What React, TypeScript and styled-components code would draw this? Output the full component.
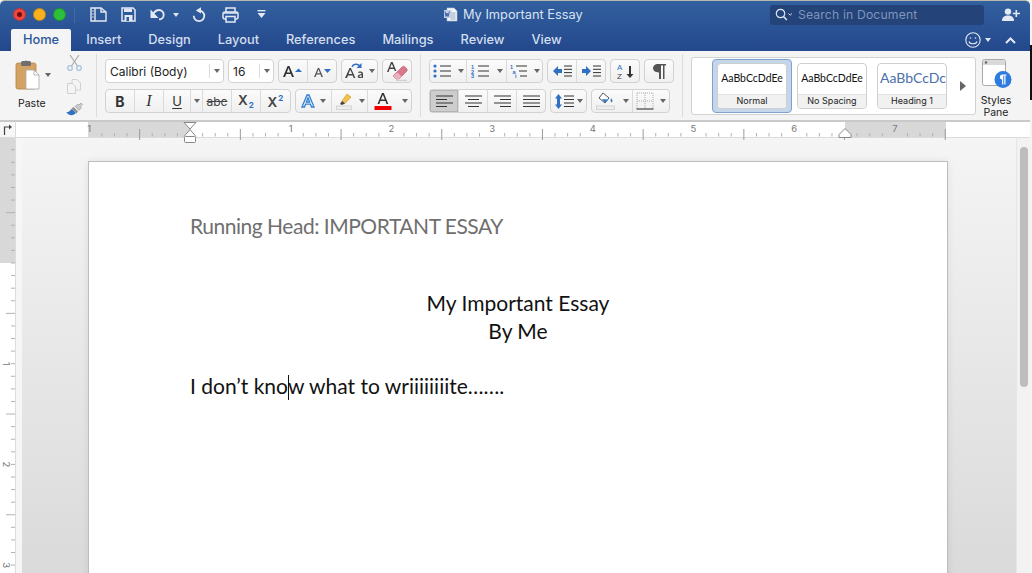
import styled, { createGlobalStyle } from "styled-components";

// #2f5a9e -> #24488c (title bar)
// #f3f3f3 (ribbon)
// #2b579a (active tab text)
const UI = `"Inter", "Liberation Sans", sans-serif`;
const DOC = `"Lato", "Open Sans", sans-serif`;

const Global = createGlobalStyle`
  html, body { margin: 0; padding: 0; background: #fff; overflow: hidden; }
  * { box-sizing: border-box; }
`;

const Screen = styled.div`
  width: 1032px;
  height: 573px;
  overflow: hidden;
  display: flex;
  flex-direction: column;
  font-family: ${UI};
  background: linear-gradient(#f6f4f0 45px, #111 45px, #111 100px, #f4f4f4 100px);
`;

const Blue = styled.div`
  height: 51px;
  flex: none;
  background: linear-gradient(#33609f, #23488c);
  border-top: 1px solid #b9b6ae;
  margin-right: 2px;
  border-radius: 5px 5px 0 0;
`;

const TitleBar = styled.div`
  height: 27px;
  display: grid;
  grid-template-columns: 444px 326px 214px 1fr;
  align-items: center;
`;

const TitleLeft = styled.div`
  display: flex;
  align-items: center;
  padding-left: 13px;
`;

const Light = styled.span<{ $c: string }>`
  width: 13px;
  height: 13px;
  border-radius: 50%;
  background: ${(p) => p.$c};
  border: 1px solid rgba(0, 0, 0, 0.22);
  margin-right: 7px;
  display: flex;
  align-items: center;
  justify-content: center;
`;

const RedDot = styled.span`
  width: 5px;
  height: 5px;
  border-radius: 50%;
  background: #6d0b0b;
`;

const TitleDivider = styled.span`
  width: 1px;
  height: 16px;
  background: #3f6aa8;
  margin: 0 15px 0 1px;
`;

const QuickIcon = styled.span<{ $w: number; $gap?: number }>`
  width: ${(p) => p.$w}px;
  height: 18px;
  margin-right: ${(p) => p.$gap ?? 0}px;
  display: flex;
  align-items: center;
  justify-content: center;
`;

const DocTitle = styled.div`
  display: flex;
  align-items: center;
  gap: 5px;
  color: #d9e3f1;
  font-size: 12.8px;
`;

const SearchBox = styled.div`
  height: 20px;
  background: #234379;
  border-radius: 3px;
  display: flex;
  align-items: center;
  padding-left: 5px;
  gap: 5px;
  color: #7f96bb;
  font-size: 12.2px;
  letter-spacing: 0.15px;
`;

const PersonSlot = styled.div`
  display: flex;
  justify-content: center;
  padding-left: 8px;
`;

const TabsRow = styled.div`
  height: 23px;
  display: flex;
  align-items: flex-end;
  padding-left: 11px;
`;

const Tab = styled.div<{ $active?: boolean }>`
  height: 22px;
  padding: 1px 12px 0;
  margin-right: 3px;
  font-size: 12.8px;
  line-height: 20px;
  font-weight: 500;
  border-radius: 2px 2px 0 0;
  color: ${(p) => (p.$active ? "#2b579a" : "#d3deee")};
  background: ${(p) => (p.$active ? "#f4f4f4" : "transparent")};
`;

const TabsRight = styled.div`
  margin-left: auto;
  height: 22px;
  display: flex;
  align-items: center;
  gap: 4px;
  padding-right: 14px;
`;

const Ribbon = styled.div`
  height: 71px;
  flex: none;
  display: flex;
  background: #f4f4f4;
  border-bottom: 2px solid #c9c9c9;
  margin-right: 2px;
`;

const PasteGroup = styled.div`
  width: 97px;
  height: 63px;
  margin-top: 3px;
  border-right: 1px solid #dcdcdc;
  display: flex;
`;

const PasteButton = styled.div`
  width: 62px;
  padding: 4px 0 0 15px;
  display: flex;
  flex-direction: column;
  font-size: 10.5px;
  color: #222;
`;

const PasteTop = styled.div`
  display: flex;
  align-items: center;
  gap: 5px;
  height: 34px;
`;

const PasteLabel = styled.div`
  margin: 5px 0 0 3px;
`;

const ClipColumn = styled.div`
  width: 24px;
  display: flex;
  flex-direction: column;
  align-items: center;
  justify-content: space-between;
  padding: 1px 0 0;
`;

const ToolsColumn = styled.div<{ $w: number; $pl?: number }>`
  width: ${(p) => p.$w}px;
  padding-left: ${(p) => p.$pl ?? 0}px;
  display: flex;
  flex-direction: column;
  gap: 6px;
  padding-top: 8px;
`;

const ToolRow = styled.div`
  display: flex;
  gap: 4px;
`;

const Group = styled.div<{ $ml?: number }>`
  height: 24px;
  display: flex;
  margin-left: ${(p) => p.$ml ?? 0}px;
  background: linear-gradient(#fbfbfb, #f0f0f0);
  border: 1px solid #d2d2d2;
  border-radius: 4px;
`;

const Cell = styled.div<{ $w: number; $on?: boolean; $plain?: boolean }>`
  width: ${(p) => p.$w}px;
  flex: none;
  display: flex;
  align-items: center;
  justify-content: center;
  border-right: ${(p) => (p.$plain ? "none" : "1px solid #dadada")};
  background: ${(p) => (p.$on ? "#cdcdcd" : "transparent")};
  box-shadow: ${(p) => (p.$on ? "inset 0 0 0 1px #b4b4b4" : "none")};
  color: #333;
  font-size: 13px;
  &:last-child {
    border-right: none;
  }
`;

const Caret = styled.span<{ $light?: boolean; $ml?: number; $mr?: number }>`
  width: 0;
  height: 0;
  margin-left: ${(p) => p.$ml ?? 0}px;
  margin-right: ${(p) => p.$mr ?? 0}px;
  border-left: 3px solid transparent;
  border-right: 3px solid transparent;
  border-top: 4px solid ${(p) => (p.$light ? "#dfe6f1" : "#666")};
`;

const Select = styled.div<{ $w: number; $ml?: number }>`
  width: ${(p) => p.$w}px;
  height: 24px;
  margin-left: ${(p) => p.$ml ?? 0}px;
  background: #fff;
  border: 1px solid #d2d2d2;
  border-radius: 4px;
  display: flex;
  align-items: center;
  font-size: 12px;
  color: #222;
  padding-left: 4px;
`;

const SelectText = styled.span`
  flex: 1;
`;

const SelectArrow = styled.span`
  width: 14px;
  height: 14px;
  border-left: 1px solid #dcdcdc;
  display: flex;
  align-items: center;
  justify-content: center;
`;

const BoldGlyph = styled.span`
  font-weight: 700;
  font-size: 14px;
  color: #333;
`;

const ItalicGlyph = styled.span`
  font-family: "Liberation Serif", serif;
  font-style: italic;
  font-size: 16px;
  color: #333;
`;

const UnderGlyph = styled.span`
  font-size: 13px;
  color: #333;
  text-decoration: underline;
  text-underline-offset: 2px;
`;

const StrikeGlyph = styled.span`
  font-size: 12px;
  color: #444;
  text-decoration: line-through;
`;

const ScriptGlyph = styled.span`
  font-size: 13.5px;
  font-weight: 600;
  color: #444;
`;

const ScriptMark = styled.span<{ $up?: boolean }>`
  font-size: 8px;
  font-weight: 700;
  color: #2f6fc4;
  vertical-align: ${(p) => (p.$up ? "6px" : "-3px")};
  margin-left: 1px;
`;

const RibbonDivider = styled.div`
  width: 1px;
  height: 63px;
  margin: 3px 8px 0;
  background: #dcdcdc;
`;

const Gallery = styled.div`
  width: 285px;
  height: 58px;
  margin: 6px 0 0 0;
  background: #fff;
  border: 1px solid #d2d2d2;
  border-radius: 3px;
  display: flex;
  align-items: center;
  padding-left: 20px;
`;

const StyleCard = styled.div<{ $sel?: boolean }>`
  width: ${(p) => (p.$sel ? 80 : 70)}px;
  height: ${(p) => (p.$sel ? 54 : 46)}px;
  margin-right: ${(p) => (p.$sel ? 5 : 10)}px;
  padding: ${(p) => (p.$sel ? "3px 4px" : "0")};
  background: ${(p) => (p.$sel ? "#c5d6ea" : "transparent")};
  border: ${(p) => (p.$sel ? "1px solid #7fa3cf" : "none")};
  border-radius: 4px;
  display: flex;
`;

const StyleInner = styled.div`
  flex: 1;
  min-width: 0;
  background: #fff;
  border: 1px solid #cfcfcf;
  border-radius: 4px;
  display: flex;
  flex-direction: column;
  overflow: hidden;
`;

const Sample = styled.div<{ $h?: boolean }>`
  flex: 1;
  display: flex;
  align-items: center;
  justify-content: ${(p) => (p.$h ? "flex-start" : "center")};
  padding: ${(p) => (p.$h ? "0 0 3px 2px" : "0 0 3px")};
  white-space: nowrap;
  overflow: hidden;
  font-family: ${DOC};
  font-size: ${(p) => (p.$h ? 14 : 10.5)}px;
  color: ${(p) => (p.$h ? "#4a6fab" : "#111")};
`;

const SampleName = styled.div`
  height: 14px;
  background: #f1f1f1;
  border-top: 1px solid #e2e2e2;
  font-size: 9px;
  line-height: 12px;
  text-align: center;
  color: #222;
`;

const GalleryArrow = styled.span`
  width: 0;
  height: 0;
  margin-left: 3px;
  border-top: 5px solid transparent;
  border-bottom: 5px solid transparent;
  border-left: 6px solid #666;
`;

const StylesPane = styled.div`
  width: 40px;
  padding-top: 8px;
  display: flex;
  flex-direction: column;
  align-items: center;
  font-size: 10.5px;
  line-height: 12px;
  color: #222;
  text-align: center;
`;

const PaneIconSlot = styled.div`
  margin-left: 2px;
  height: 30px;
`;

const PaneLabel = styled.div`
  margin-top: 6px;
`;

const RulerBar = styled.div`
  height: 16px;
  flex: none;
  display: flex;
  background: #fff;
  border-bottom: 1px solid #dcdcdc;
  margin-right: 2px;
`;

const RulerCorner = styled.div`
  width: 16px;
  border-right: 1px solid #dcdcdc;
  background: #f7f7f7;
  display: flex;
  align-items: center;
  justify-content: center;
`;

const RulerTrack = styled.div`
  flex: 1;
  position: relative;
  display: flex;
`;

const RulerBlank = styled.div<{ $w: number; $grey?: boolean }>`
  width: ${(p) => p.$w}px;
  background: ${(p) => (p.$grey ? "#d8d8d8" : "#fff")};
`;

const TickLayer = styled.svg`
  position: absolute;
  left: 0;
  top: 0;
`;

const Body = styled.div`
  flex: 1;
  min-height: 0;
  display: flex;
  margin-right: 2px;
`;

const VRuler = styled.div`
  width: 16px;
  flex: none;
  position: relative;
  background: #fff;
  border-right: 1px solid #dcdcdc;
`;

const VMargin = styled.div`
  height: 125px;
  background: #d8d8d8;
`;

const Strip = styled.div`
  width: 6px;
  flex: none;
  background: #f6f6f6;
`;

const Canvas = styled.div`
  flex: 1;
  min-width: 0;
  padding: 23px 0 0 66px;
  background: linear-gradient(#f5f5f5, #dadada);
  overflow: hidden;
`;

const Sheet = styled.div`
  width: 860px;
  height: 600px;
  background: #fff;
  border: 1px solid #bdbdbd;
  box-shadow: 0 0 8px rgba(0, 0, 0, 0.08);
  padding: 50px 101px 0;
  font-family: ${DOC};
  font-size: 21px;
  line-height: 28px;
  color: #111;
`;

const HeadLine = styled.div`
  color: #6f6f6f;
  letter-spacing: -0.48px;
  margin-bottom: 49px;
`;

const Center = styled.div`
  text-align: center;
`;

const BodyLine = styled.div`
  margin-top: 27px;
`;

const Cursor = styled.span`
  display: inline-block;
  width: 1px;
  height: 25px;
  margin: 0 -1px 0 0;
  background: #111;
  vertical-align: -6px;
`;

const ScrollCol = styled.div`
  width: 14px;
  flex: none;
  padding: 9px 3px 0 3px;
  background: #f2f2f2;
  border-left: 1px solid #e6e6e6;
`;

const Thumb = styled.div`
  width: 8px;
  height: 240px;
  border-radius: 4px;
  background: #bdbdbd;
`;

const I = { s: "#e3e9f3" };

function IconSidebar() {
  return (
    <svg width="17" height="15" viewBox="0 0 17 15" fill="none" stroke={I.s} strokeWidth="1.4">
      <path d="M1 1h10l5 4v9H1z" />
      <path d="M5 1v13M11 1v4h5" />
      <path d="M2.5 4h1M2.5 7h1M2.5 10h1" />
    </svg>
  );
}

function IconSave() {
  return (
    <svg width="15" height="15" viewBox="0 0 15 15" fill="none" stroke={I.s} strokeWidth="1.5">
      <path d="M1 1h11l2 2v11H1z" />
      <path d="M3 1.500v3.500h8V1.500" fill={I.s} strokeWidth="0" />
      <rect x="3.500" y="8" width="8" height="6" fill={I.s} strokeWidth="0" />
      <rect x="5.500" y="10" width="2.500" height="4" fill="#2f5a9e" strokeWidth="0" />
    </svg>
  );
}

function IconUndo() {
  return (
    <svg width="16" height="13" viewBox="0 0 16 13" fill="none" stroke={I.s} strokeWidth="1.9">
      <path d="M3 6C5 3 7 2 9 2a4.700 4.700 0 0 1 0 9.400" />
      <path d="M0.500 1.500V10H8.500z" fill={I.s} strokeWidth="0" />
    </svg>
  );
}

function IconRedo() {
  return (
    <svg width="14" height="15" viewBox="0 0 14 15" fill="none" stroke={I.s} strokeWidth="1.8">
      <path d="M7 3.500A5.300 5.300 0 1 1 1.700 8.800" />
      <path d="M3.800 3.400L9 0.300V6.500z" fill={I.s} strokeWidth="0" />
    </svg>
  );
}

function IconPrint() {
  return (
    <svg width="17" height="16" viewBox="0 0 17 16" fill="none" stroke={I.s} strokeWidth="1.5">
      <path d="M4 5V1h9v4" />
      <rect x="1" y="5" width="15" height="7" rx="2" fill="#2f5a9e" />
      <rect x="4" y="9.500" width="9" height="5.500" fill="#2f5a9e" />
      <path d="M2 6h13" strokeWidth="1.500" />
    </svg>
  );
}

function IconCustomize() {
  return (
    <svg width="9" height="9" viewBox="0 0 9 9" fill={I.s}>
      <rect x="0.5" y="0" width="8" height="1.4" />
      <path d="M0.5 3h8l-4 5z" />
    </svg>
  );
}

function IconWord() {
  return (
    <svg width="14" height="15" viewBox="0 0 14 15">
      <path d="M3 1h7l3 3v10H3z" fill="#f3f5f8" stroke="#b9c4d6" strokeWidth="0.6" />
      <path d="M6.5 6h5M6.5 8h5M6.5 10h5M6.5 12h5" stroke="#8296b4" strokeWidth="0.8" />
      <rect x="0" y="3" width="7.5" height="8" fill="#c3d0e5" />
      <path d="M1 4.5l1 5 1-3.4 1 3.4 1.4-5" stroke="#2b579a" strokeWidth="0.9" fill="none" />
    </svg>
  );
}

function IconSearch() {
  return (
    <svg width="18" height="13" viewBox="0 0 18 13" fill="none" stroke="#dfe6f1" strokeWidth="1.2">
      <circle cx="5.5" cy="5.5" r="4.2" />
      <path d="M8.6 8.6l3.2 3.4" strokeWidth="1.5" />
      <path d="M13.5 5.5l1.7 1.7 1.7-1.7" strokeWidth="1" />
    </svg>
  );
}

function IconAddPerson() {
  return (
    <svg width="18" height="13" viewBox="0 0 18 13" fill="#e3e9f3">
      <circle cx="6" cy="3.6" r="3.2" />
      <path d="M0 13c0-4 2.5-5.4 6-5.4s6 1.4 6 5.4z" />
      <path d="M13.5 2h1.6v2.7H18v1.6h-2.9V9h-1.6V6.3h-2.7V4.7h2.7z" />
    </svg>
  );
}

function IconSmile() {
  return (
    <svg width="16" height="16" viewBox="0 0 16 16" fill="none" stroke="#e3e9f3" strokeWidth="1.1">
      <circle cx="8" cy="8" r="7.2" />
      <circle cx="5.5" cy="6" r="0.8" fill="#e3e9f3" strokeWidth="0" />
      <circle cx="10.5" cy="6" r="0.8" fill="#e3e9f3" strokeWidth="0" />
      <path d="M4 9.5c1 3 7 3 8 0" />
    </svg>
  );
}

function IconChevronUp() {
  return (
    <svg width="11" height="7" viewBox="0 0 11 7" fill="none" stroke="#e3e9f3" strokeWidth="2">
      <path d="M1 6l4.5-4.5L10 6" />
    </svg>
  );
}

function IconPaste() {
  return (
    <svg width="25" height="30" viewBox="0 0 25 30">
      <rect x="1" y="3" width="20" height="26" rx="2" fill="#d5a266" stroke="#b78443" strokeWidth="0.8" />
      <rect x="6" y="1" width="10" height="5" rx="1.5" fill="#6f6f6f" />
      <circle cx="11" cy="2" r="1.6" fill="#6f6f6f" />
      <path d="M11 10h8l5 5v14H11z" fill="#fff" stroke="#a9a9a9" strokeWidth="0.8" />
      <path d="M19 10v5h5" fill="none" stroke="#a9a9a9" strokeWidth="0.8" />
    </svg>
  );
}

function IconCut() {
  return (
    <svg width="15" height="16" viewBox="0 0 15 16" fill="none" stroke="#b0b0b0" strokeWidth="1.3">
      <path d="M3 0l7.5 11M12 0L4.5 11" />
      <circle cx="3" cy="13" r="2.3" stroke="#a9c1e0" />
      <circle cx="12" cy="13" r="2.3" stroke="#a9c1e0" />
    </svg>
  );
}

function IconCopy() {
  return (
    <svg width="14" height="15" viewBox="0 0 14 15" fill="#f4f4f4" stroke="#d0d0d0">
      <path d="M5 .5h5l3.5 3.5v7H5z" />
      <path d="M.5 4.5h5l3 3v7h-8z" />
    </svg>
  );
}

function IconBrush() {
  return (
    <svg width="17" height="15" viewBox="0 0 17 15">
      <path d="M0 10c3 1 4-2 6-3l4 4c-2 2-6 4-10-1z" fill="#2f6fc4" />
      <path d="M5.5 6.5l5 5 1.5-2-4.5-4.5z" fill="#8d8d8d" />
      <path d="M9 4.5l3-2.5 1 1 2-2 1.5 1.5-2 2 1 1-2.5 3z" fill="#c9c9c9" stroke="#8a8a8a" strokeWidth="0.5" />
    </svg>
  );
}

function IconGrow({ up }: { up: boolean }) {
  return (
    <svg width={up ? 20 : 17} height="13" viewBox={up ? "0 0 20 13" : "0 0 17 13"}>
      {up ? (
        <path d="M0 12L4.6 1h1.8L11 12H9L7.8 9H3.2L2 12zM3.8 7.4h3.4L5.5 3z" fill="#333" />
      ) : (
        <path d="M0 12L3.8 3h1.4L9 12H7.4L6.5 9.6h-4L1.6 12zM3 8.2h3L4.5 4.5z" fill="#555" />
      )}
      {up ? <path d="M12 7l3.5-3.5L19 7z" fill="#2f6fc4" /> : <path d="M10 4h7l-3.5 4z" fill="#2f6fc4" />}
    </svg>
  );
}

function IconChangeCase() {
  return (
    <svg width="20" height="16" viewBox="0 0 20 16">
      <path d="M0 15L4.5 5h1.4L10.4 15H8.7l-1-2.6H3L2 15zM3.6 11h3.6L5.2 6.7z" fill="#444" />
      <path d="M15 8.5c2.8 0 3 1.5 3 2.6V15h-1.3l-.1-.8c-1.3 1.4-3.8 1-3.8-.8 0-1.8 2-2.2 3.8-2.2 0-1-.5-1.5-1.6-1.5-.6 0-1.2.2-1.7.4v-1.2c.5-.2 1.1-.4 1.7-.4zm1.6 3.7c-1.2 0-2.4.2-2.4 1.1s1.6 1 2.4.1z" fill="#444" />
      <path d="M7 4c1-3 5-4 8-1" fill="none" stroke="#2f6fc4" strokeWidth="1.4" />
      <path d="M16.5 0v5h-5z" fill="#2f6fc4" />
    </svg>
  );
}

function IconEraser() {
  return (
    <svg width="21" height="20" viewBox="0 0 21 20">
      <path d="M0 11L4 1h1.6L9.4 10H7.8L7 8H2.6L1.7 11zM3.2 6.6h3.2L4.8 2.8z" fill="#444" />
      <path d="M6 15l9-9c1-1 2-1 3 0l1.5 1.5c1 1 1 2 0 3L12 18H9z" fill="#d9778b" stroke="#b85a6e" strokeWidth="0.6" />
      <path d="M6 15l3 3h3l2.5-2.5-4-4z" fill="#eab2be" />
      <path d="M9 19.3h11" stroke="#bbb" strokeWidth="0.8" />
    </svg>
  );
}

function IconTextEffect() {
  return (
    <svg width="14" height="14" viewBox="0 0 14 14" fill="#fff" stroke="#2f7fd0" strokeWidth="1.3">
      <path d="M1 13L6 1h2l5 12h-2.5l-1-2.8H4.5L3.5 13zM5.3 8h3.4L7 3.8z" />
    </svg>
  );
}

function IconHighlight() {
  return (
    <svg width="20" height="18" viewBox="0 0 20 18">
      <path d="M8 9l5-7 4 3-6 6.500z" fill="#f5c14a" stroke="#c89623" strokeWidth="0.6" />
      <path d="M6 12l2-3 3 2.500-3 1.500z" fill="#444" />
      <rect x="2.500" y="14" width="15" height="3.500" fill="#eeeeee" stroke="#c9c9c9" strokeWidth="0.7" />
    </svg>
  );
}

function IconFontColor() {
  return (
    <svg width="18" height="18" viewBox="0 0 18 18">
      <path d="M3.500 12L8 1h1.800L14.300 12h-1.800l-1.100-3H6.400l-1.100 3zM7 7.500h3.800L8.900 2.800z" fill="#333" />
      <rect x="0.500" y="14" width="17" height="4" fill="#f00000" />
    </svg>
  );
}

function IconList({ kind }: { kind: "bullet" | "num" | "multi" }) {
  return (
    <svg width="19" height="14" viewBox="0 0 19 14">
      {kind === "bullet" && (
        <g fill="#2f6fc4">
          <circle cx="2" cy="2" r="1.600" />
          <circle cx="2" cy="7" r="1.600" />
          <circle cx="2" cy="12" r="1.600" />
        </g>
      )}
      {kind === "num" && (
        <g fill="#2f6fc4" fontFamily="Liberation Sans" fontSize="5.500" fontWeight="700">
          <text x="0" y="4.500">1</text>
          <text x="0" y="9.500">2</text>
          <text x="0" y="14">3</text>
        </g>
      )}
      {kind === "multi" && (
        <g fill="#2f6fc4" fontFamily="Liberation Sans" fontSize="5.500" fontWeight="700">
          <text x="0" y="4.500">1</text>
          <text x="2.500" y="9.500">a</text>
          <text x="5" y="14">i</text>
        </g>
      )}
      <path
        d={kind === "multi" ? "M6 2h11M9 7h8M10 12h7" : "M7 2h11M7 7h11M7 12h11"}
        stroke="#333"
        strokeWidth="1"
      />
    </svg>
  );
}

function IconIndent({ right }: { right: boolean }) {
  return (
    <svg width="19" height="12" viewBox="0 0 19 12">
      <path d={right ? "M0 4h4V1l5 5-5 5V8H0z" : "M9 4H5V1L0 6l5 5V8h4z"} fill="#2f6fc4" />
      <path d="M11 1h8M11 4.300h8M11 7.600h8M11 11h8" stroke="#333" strokeWidth="1" />
    </svg>
  );
}

function IconSort() {
  return (
    <svg width="17" height="18" viewBox="0 0 17 18">
      <text x="0" y="7.500" fontSize="8" fontFamily="Liberation Sans" fill="#2f6fc4">A</text>
      <text x="0" y="17" fontSize="8" fontFamily="Liberation Sans" fill="#444">Z</text>
      <path d="M12 4v8h-2.500l3.500 4 3.500-4H14V4z" fill="#333" />
    </svg>
  );
}

function IconPilcrow() {
  return (
    <svg width="13" height="15" viewBox="0 0 13 15" fill="#555">
      <path d="M5 0h8v1.500h-1.500V15H10V1.500H8V15H6V8.500C2 8.500 0 6.500 0 4.300S2 0 5 0z" />
    </svg>
  );
}

function IconAlign({ kind }: { kind: "l" | "c" | "r" | "j" }) {
  const d = {
    l: "M0 1h17M0 4.500h11M0 8h17M0 11.500h11",
    c: "M0 1h17M3 4.500h11M0 8h17M3 11.500h11",
    r: "M0 1h17M6 4.500h11M0 8h17M6 11.500h11",
    j: "M0 1h17M0 4.500h17M0 8h17M0 11.500h17",
  }[kind];
  return (
    <svg width="17" height="12" viewBox="0 0 17 12">
      <path d={d} stroke="#333" strokeWidth="1" />
    </svg>
  );
}

function IconSpacing() {
  return (
    <svg width="19" height="15" viewBox="0 0 19 15">
      <path d="M3.500 0L7 4.500H5v6h2L3.500 15 0 10.500h2v-6H0z" fill="#2f6fc4" />
      <path d="M9 2h10M9 5.500h10M9 9h10M9 12.500h10" stroke="#333" strokeWidth="1" />
    </svg>
  );
}

function IconShading() {
  return (
    <svg width="20" height="18" viewBox="0 0 20 18">
      <path d="M7 1l6 5-4 5-6-5z" fill="#fff" stroke="#555" strokeWidth="1" />
      <path d="M6 7l6 .5-3 3.500z" fill="#2f7fd0" />
      <path d="M15 6c1.500 2 2 3 1 4s-2 0-1-4z" fill="#2f7fd0" />
      <rect x="0.500" y="14" width="18" height="3.500" fill="#eee" stroke="#c9c9c9" strokeWidth="0.7" />
    </svg>
  );
}

function IconBorders() {
  return (
    <svg width="18" height="18" viewBox="0 0 18 18" fill="none">
      <path d="M1 1h16M1 9h16M1 1v16M9 1v16M17 1v16" stroke="#aaa" strokeWidth="1" strokeDasharray="1 1" />
      <path d="M0.500 17h17" stroke="#222" strokeWidth="1" />
    </svg>
  );
}

function IconStylesPane() {
  return (
    <svg width="30" height="30" viewBox="0 0 30 30">
      <rect x="0.500" y="0.500" width="23" height="26" rx="2" fill="#fff" stroke="#a8a8a8" />
      <path d="M1 3a2 2 0 0 1 2-2h18a2 2 0 0 1 2 2v3H1z" fill="#d9d9d9" />
      <circle cx="4" cy="3.500" r="1.200" fill="#666" />
      <circle cx="21" cy="20.500" r="8.500" fill="#2e7be0" />
      <path d="M19.500 15.500h5v1h-1v9h-1.200v-9h-1v9h-1.200v-5c-3 0-3-5 .4-5z" fill="#fff" />
    </svg>
  );
}

function IconTabStop() {
  return (
    <svg width="9" height="11" viewBox="0 0 9 11" fill="none" stroke="#444" strokeWidth="1.200">
      <path d="M1.500 11V3H7" />
      <path d="M6 0.500L9 3 6 5.500z" fill="#444" strokeWidth="0" />
    </svg>
  );
}

const HScale = Array.from({ length: 75 }, (_, i) => i - 8);

function HorizontalTicks() {
  // origin is the left margin, 100.7px per inch
  const x0 = 174;
  const step = 100.7 / 8;
  return (
    <TickLayer width="1014" height="24" viewBox="0 0 1014 24" overflow="visible">
      {HScale.map((n) => {
        const x = x0 + n * step;
        if (x < 72 || x > 930 || n % 8 === 0) return null;
        const half = n % 4 === 0;
        return (
          <path
            key={n}
            d={`M${x} ${half ? 7 : 11}v${half ? 11 : 3.500}`}
            stroke={half ? "#9a9a9a" : "#b2b2b2"}
            strokeWidth="1"
          />
        );
      })}
      {[-1, 1, 2, 3, 4, 5, 6, 7].map((n) => (
        <text key={n} x={x0 + n * 100.7} y="9.500" fontSize="9.500" textAnchor="middle" fill="#777">
          {Math.abs(n)}
        </text>
      ))}
      <path d="M168 0.500h12l-6 6.500zM168 14.500l6-7 6 7" fill="#fff" stroke="#888" strokeWidth="1" />
      <rect x="168.500" y="14.500" width="11" height="6" rx="1" fill="#fff" stroke="#888" strokeWidth="1" />
      <path d="M823 15.500v-3l6-6 6 6v3z" fill="#fff" stroke="#888" strokeWidth="1" />
    </TickLayer>
  );
}

const VScale = Array.from({ length: 40 }, (_, i) => i - 9);

function VerticalTicks() {
  const y0 = 125;
  const step = 100.7 / 8;
  return (
    <TickLayer width="15" height="440" viewBox="0 0 15 440">
      {VScale.map((n) => {
        const y = y0 + n * step;
        if (y < 0) return null;
        const half = n % 4 === 0 && n % 8 !== 0;
        return (
          <path
            key={n}
            d={`M${half ? 6 : 11} ${y}H15`}
            stroke="#b2b2b2"
            strokeWidth="1"
          />
        );
      })}
      {[1, 2, 3].map((n) => (
        <text
          key={n}
          x="5.500"
          y={y0 + n * 100.7}
          fontSize="9.500"
          fill="#777"
          textAnchor="middle"
          dominantBaseline="middle"
          transform={`rotate(90 5.500 ${y0 + n * 100.7})`}
        >
          {n}
        </text>
      ))}
    </TickLayer>
  );
}

export default function App() {
  return (
    <Screen>
      <Global />
      <Blue>
        <TitleBar>
          <TitleLeft>
            <Light $c="#f0463f"><RedDot /></Light>
            <Light $c="#f8b01f" />
            <Light $c="#2cc03a" />
            <TitleDivider />
            <QuickIcon $w={17} $gap={14}><IconSidebar /></QuickIcon>
            <QuickIcon $w={15} $gap={14}><IconSave /></QuickIcon>
            <QuickIcon $w={16} $gap={6}><IconUndo /></QuickIcon>
            <QuickIcon $w={7} $gap={13}><Caret $light /></QuickIcon>
            <QuickIcon $w={14} $gap={16}><IconRedo /></QuickIcon>
            <QuickIcon $w={17} $gap={18}><IconPrint /></QuickIcon>
            <QuickIcon $w={9}><IconCustomize /></QuickIcon>
          </TitleLeft>
          <DocTitle>
            <IconWord />
            My Important Essay
          </DocTitle>
          <SearchBox>
            <IconSearch />
            Search in Document
          </SearchBox>
          <PersonSlot><IconAddPerson /></PersonSlot>
        </TitleBar>
        <TabsRow>
          <Tab $active>Home</Tab>
          <Tab>Insert</Tab>
          <Tab>Design</Tab>
          <Tab>Layout</Tab>
          <Tab>References</Tab>
          <Tab>Mailings</Tab>
          <Tab>Review</Tab>
          <Tab>View</Tab>
          <TabsRight>
            <IconSmile />
            <Caret $light $mr={10} />
            <IconChevronUp />
          </TabsRight>
        </TabsRow>
      </Blue>

      <Ribbon>
        <PasteGroup>
          <PasteButton>
            <PasteTop>
              <IconPaste />
              <Caret />
            </PasteTop>
            <PasteLabel>Paste</PasteLabel>
          </PasteButton>
          <ClipColumn>
            <IconCut />
            <IconCopy />
            <IconBrush />
          </ClipColumn>
        </PasteGroup>

        <ToolsColumn $w={315} $pl={8}>
          <ToolRow>
            <Select $w={119}>
              <SelectText>Calibri (Body)</SelectText>
              <SelectArrow><Caret /></SelectArrow>
            </Select>
            <Select $w={46}>
              <SelectText>16</SelectText>
              <SelectArrow><Caret /></SelectArrow>
            </Select>
            <Group>
              <Cell $w={29}><IconGrow up /></Cell>
              <Cell $w={28}><IconGrow up={false} /></Cell>
            </Group>
            <Group>
              <Cell $w={25} $plain><IconChangeCase /></Cell>
              <Cell $w={10} $plain><Caret /></Cell>
            </Group>
            <Group>
              <Cell $w={28}><IconEraser /></Cell>
            </Group>
          </ToolRow>
          <ToolRow>
            <Group>
              <Cell $w={29}><BoldGlyph>B</BoldGlyph></Cell>
              <Cell $w={29}><ItalicGlyph>I</ItalicGlyph></Cell>
              <Cell $w={27}><UnderGlyph>U</UnderGlyph></Cell>
              <Cell $w={12}><Caret /></Cell>
              <Cell $w={29}><StrikeGlyph>abc</StrikeGlyph></Cell>
              <Cell $w={29}><ScriptGlyph>X<ScriptMark>2</ScriptMark></ScriptGlyph></Cell>
              <Cell $w={29}><ScriptGlyph>X<ScriptMark $up>2</ScriptMark></ScriptGlyph></Cell>
            </Group>
            <Group>
              <Cell $w={36}>
                <IconTextEffect />
                <Caret $ml={5} />
              </Cell>
              <Cell $w={24} $plain><IconHighlight /></Cell>
              <Cell $w={12}><Caret /></Cell>
              <Cell $w={30} $plain><IconFontColor /></Cell>
              <Cell $w={13}><Caret /></Cell>
            </Group>
          </ToolRow>
        </ToolsColumn>

        <RibbonDivider />

        <ToolsColumn $w={245}>
          <ToolRow>
            <Group>
              <Cell $w={25} $plain><IconList kind="bullet" /></Cell>
              <Cell $w={12}><Caret /></Cell>
              <Cell $w={27} $plain><IconList kind="num" /></Cell>
              <Cell $w={13}><Caret /></Cell>
              <Cell $w={25} $plain><IconList kind="multi" /></Cell>
              <Cell $w={10} $plain><Caret /></Cell>
            </Group>
            <Group>
              <Cell $w={29}><IconIndent right={false} /></Cell>
              <Cell $w={28}><IconIndent right /></Cell>
            </Group>
            <Group>
              <Cell $w={28}><IconSort /></Cell>
            </Group>
            <Group>
              <Cell $w={28}><IconPilcrow /></Cell>
            </Group>
          </ToolRow>
          <ToolRow>
            <Group>
              <Cell $w={29} $on><IconAlign kind="l" /></Cell>
              <Cell $w={29}><IconAlign kind="c" /></Cell>
              <Cell $w={29}><IconAlign kind="r" /></Cell>
              <Cell $w={28}><IconAlign kind="j" /></Cell>
            </Group>
            <Group>
              <Cell $w={35} $plain>
                <IconSpacing />
                <Caret $ml={3} />
              </Cell>
            </Group>
            <Group>
              <Cell $w={27} $plain><IconShading /></Cell>
              <Cell $w={14}><Caret /></Cell>
              <Cell $w={24} $plain><IconBorders /></Cell>
              <Cell $w={12} $plain><Caret /></Cell>
            </Group>
          </ToolRow>
        </ToolsColumn>

        <RibbonDivider />

        <Gallery>
          <StyleCard $sel>
            <StyleInner>
              <Sample>AaBbCcDdEe</Sample>
              <SampleName>Normal</SampleName>
            </StyleInner>
          </StyleCard>
          <StyleCard>
            <StyleInner>
              <Sample>AaBbCcDdEe</Sample>
              <SampleName>No Spacing</SampleName>
            </StyleInner>
          </StyleCard>
          <StyleCard>
            <StyleInner>
              <Sample $h>AaBbCcDc</Sample>
              <SampleName>Heading 1</SampleName>
            </StyleInner>
          </StyleCard>
          <GalleryArrow />
        </Gallery>

        <StylesPane>
          <PaneIconSlot><IconStylesPane /></PaneIconSlot>
          <PaneLabel>Styles<br />Pane</PaneLabel>
        </StylesPane>
      </Ribbon>

      <RulerBar>
        <RulerCorner><IconTabStop /></RulerCorner>
        <RulerTrack>
          <RulerBlank $w={72} />
          <RulerBlank $w={102} $grey />
          <RulerBlank $w={655} />
          <RulerBlank $w={101} $grey />
          <HorizontalTicks />
        </RulerTrack>
      </RulerBar>

      <Body>
        <VRuler>
          <VMargin />
          <VerticalTicks />
        </VRuler>
        <Strip />
        <Canvas>
          <Sheet>
            <HeadLine>Running Head: IMPORTANT ESSAY</HeadLine>
            <Center>My Important Essay</Center>
            <Center>By Me</Center>
            <BodyLine>
              I don’t kno<Cursor />w what to wriiiiiiiite…….
            </BodyLine>
          </Sheet>
        </Canvas>
        <ScrollCol>
          <Thumb />
        </ScrollCol>
      </Body>
    </Screen>
  );
}
